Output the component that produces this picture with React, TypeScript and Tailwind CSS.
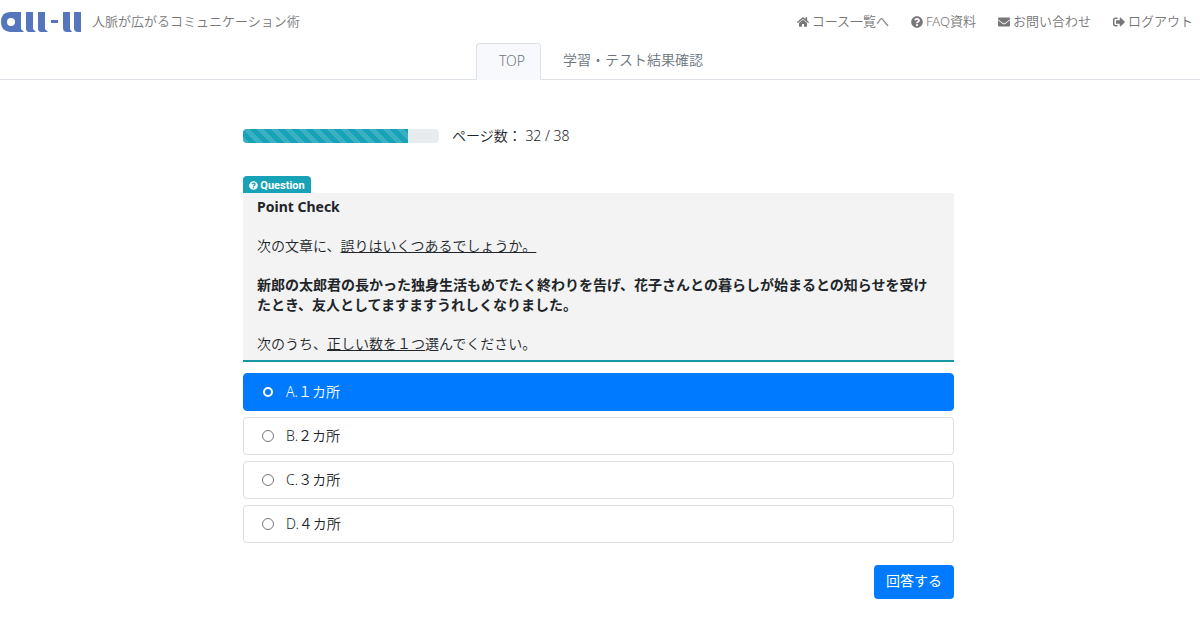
import { useState } from "react";
import { FaEnvelope, FaHome, FaQuestionCircle, FaSignOutAlt } from "react-icons/fa";

const links = [
  { label: "コース一覧へ", icon: FaHome },
  { label: "FAQ資料", icon: FaQuestionCircle },
  { label: "お問い合わせ", icon: FaEnvelope },
  { label: "ログアウト", icon: FaSignOutAlt },
];

const choices = ["A.１カ所", "B.２カ所", "C.３カ所", "D.４カ所"];

const page = 32;
const pages = 38;

function Logo() {
  return (
    <svg viewBox="0 0 82 22" className="h-[22px] w-[82px]" fill="#5575bd" role="img" aria-label="all-ll">
      <path
        fillRule="evenodd"
        d="M10 1H21V18L24 21H10Q1 20 1 11Q1 1 10 1ZM11 7A4 4 0 1 0 11 15A4 4 0 0 0 11 7Z"
      />
      <path d="M26 1H33V18L36 21H29Q26 21 26 17Z" />
      <path d="M38 1H45V18L48 21H41Q38 21 38 17Z" />
      <path d="M51 9H58V12H51Z" />
      <path d="M63 1H70V18L72 21H67Q63 21 63 17Z" />
      <path d="M74 1H81V21H78Q74 21 74 17Z" />
    </svg>
  );
}

function Header() {
  return (
    <header className="border-b border-[#dee2e6]">
      <div className="flex h-[43px] items-center justify-between pr-[7px] text-[13px] text-[#777777]">
        <div className="flex items-center gap-[10px]">
          <Logo />
          <span className="font-[350]">人脈が広がるコミュニケーション術</span>
        </div>
        <nav className="flex gap-[22px] font-[350]">
          {links.map(({ label, icon: Icon }) => (
            <a key={label} href="#" className="flex items-center gap-[3px]">
              <Icon className="size-3" />
              {label}
            </a>
          ))}
        </nav>
      </div>
      <nav className="flex justify-center pr-[6px] text-sm font-[350] text-[#6c757d]">
        <a
          href="#"
          className="-mb-px flex h-[37px] items-center rounded-t border border-b-0 border-[#dee2e6] bg-[#f8f9fd] px-[22px] pr-[15px] pb-0.5"
        >
          TOP
        </a>
        <a href="#" className="flex h-9 items-center px-[22px] pr-[15px] pb-0.5">
          学習・テスト結果確認
        </a>
      </nav>
    </header>
  );
}

export default function App() {
  const [selected, setSelected] = useState(0);

  return (
    <div className="bg-white font-['Noto_Sans','Noto_Sans_CJK_JP',sans-serif] text-[#212529]">
      <Header />
      <main className="pt-[46px] pr-[3px] pb-9">
        <div className="mx-auto max-w-[711px] text-sm font-[350]">
          <div className="flex items-center gap-[13px]">
            <div className="h-[14px] w-[196px] overflow-hidden rounded bg-[#e9ecef]">
              <div
                className="h-full bg-[#17a2b8] bg-[linear-gradient(45deg,rgba(255,255,255,.15)_25%,transparent_25%,transparent_50%,rgba(255,255,255,.15)_50%,rgba(255,255,255,.15)_75%,transparent_75%)] bg-size-[14px_14px]"
                style={{ width: `${(page / pages) * 100}%` }}
              />
            </div>
            <span>
              ページ数： {page} / {pages}
            </span>
          </div>

          <section className="mt-[30px]">
            <h2 className="flex h-[17px] w-[68px] items-center justify-center gap-0.5 rounded-t bg-[#17a2b8] pt-0.5 font-['Roboto',sans-serif] text-[11px] font-bold text-white">
              <FaQuestionCircle className="size-[9px]" />
              Question
            </h2>
            <div className="border-b-2 border-[#1797a6] bg-[#f3f3f3] px-[14px] pt-1 pb-[6px] leading-5">
              <p className="font-bold">Point Check</p>
              <p className="mt-[19px]">
                次の文章に、<u>誤りはいくつあるでしょうか。</u>
              </p>
              <p className="mt-[19px] font-bold">
                新郎の太郎君の長かった独身生活もめでたく終わりを告げ、花子さんとの暮らしが始まるとの知らせを受けたとき、友人としてますますうれしくなりました。
              </p>
              <p className="mt-[19px]">
                次のうち、<u>正しい数を１つ</u>選んでください。
              </p>
            </div>
          </section>

          <form onSubmit={(e) => e.preventDefault()}>
            <div className="mt-[11px] flex flex-col gap-[6px]">
              {choices.map((choice, i) => (
                <label
                  key={choice}
                  className={`flex h-[38px] items-center gap-3 rounded border pb-px pl-[18px] ${
                    i === selected ? "border-[#007bff] bg-[#007bff] text-white" : "border-[#dfdfdf] bg-white"
                  }`}
                >
                  <input
                    type="radio"
                    name="answer"
                    checked={i === selected}
                    onChange={() => setSelected(i)}
                    className="size-3 appearance-none rounded-full border border-[#767676] bg-white checked:mx-px checked:size-[10px] checked:border-2 checked:border-white checked:bg-[#007bff]"
                  />
                  {choice}
                </label>
              ))}
            </div>
            <div className="mt-[22px] flex justify-end">
              <button type="submit" className="h-[34px] rounded bg-[#007bff] px-3 pb-0.5 font-normal text-white">
                回答する
              </button>
            </div>
          </form>
        </div>
      </main>
    </div>
  );
}
